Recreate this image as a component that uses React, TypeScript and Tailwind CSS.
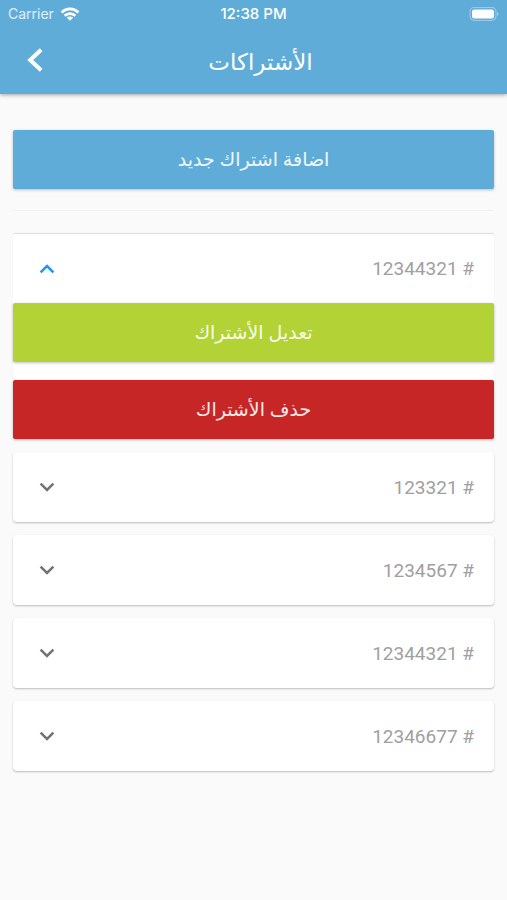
import { useState } from "react";

const subscriptions = [
  { id: 1, number: "12344321" },
  { id: 2, number: "123321" },
  { id: 3, number: "1234567" },
  { id: 4, number: "12344321" },
  { id: 5, number: "12346677" },
];

function StatusBar() {
  return (
    <div
      dir="ltr"
      className="grid h-7 grid-cols-3 items-center px-2 font-['Inter','Liberation_Sans',sans-serif] text-sm text-white"
    >
      <div className="flex items-center gap-1.5">
        <span className="text-white/80">Carrier</span>
        <svg viewBox="0 0 20 14" className="h-3.5 w-5" aria-hidden="true">
          <g fill="none" stroke="currentColor" strokeWidth="2.8">
            <path d="M1.6 5.4a12 12 0 0 1 16.8 0" />
            <path d="M4.7 8.7a7.6 7.6 0 0 1 10.6 0" />
          </g>
          <path d="M10 13.8 6.9 10.7a4.4 4.4 0 0 1 6.2 0z" fill="currentColor" />
        </svg>
      </div>
      <span className="text-center text-[15px] font-medium">12:38 PM</span>
      <svg viewBox="0 0 30 14" className="h-3.5 w-[30px] justify-self-end" aria-hidden="true">
        <rect x="1" y="0.6" width="26" height="12.8" rx="4" fill="none" stroke="#fff" strokeOpacity="0.4" />
        <rect x="3" y="2.6" width="22" height="8.8" rx="2.2" fill="#fff" />
        <path d="M28.3 5v4a2.4 2.4 0 0 0 0-4z" fill="#fff" fillOpacity="0.5" />
      </svg>
    </div>
  );
}

function ActionButton({ label, color }: { label: string; color: string }) {
  return (
    <button
      type="button"
      className={`h-[59px] w-full rounded-xs text-[19px] text-white/90 shadow-[0_1px_3px_rgba(0,0,0,0.25)] ${color}`}
    >
      {label}
    </button>
  );
}

function Chevron({ open }: { open: boolean }) {
  return (
    <svg
      viewBox="0 0 16 10"
      className={`h-2.5 w-4 ${open ? "rotate-180 text-[#2196f3]" : "text-[#737373]"}`}
      aria-hidden="true"
    >
      <path d="M1.6 1.6 8 8l6.4-6.4" fill="none" stroke="currentColor" strokeWidth="2.5" />
    </svg>
  );
}

export default function App() {
  const [openId, setOpenId] = useState<number | null>(1);

  return (
    <div
      dir="rtl"
      className="min-h-screen bg-[#fafafa] font-['Noto_Sans','DejaVu_Sans',sans-serif]"
    >
      <header className="bg-[#60acd8] shadow-[0_1px_4px_rgba(0,0,0,0.35)]">
        <StatusBar />
        <div className="flex h-[66px] items-center">
          <div className="w-14" />
          <h1 className="flex-1 text-center text-[23px] leading-8 text-white">الأشتراكات</h1>
          <button type="button" aria-label="رجوع" className="flex h-14 w-[70px] items-center justify-center pb-0.5 text-white">
            <svg viewBox="0 0 16 24" className="h-6 w-4" aria-hidden="true">
              <path d="M14.2 1.8 3.2 12l11 10.2" fill="none" stroke="currentColor" strokeWidth="4" />
            </svg>
          </button>
        </div>
      </header>

      <main className="px-[13px] pt-9 pb-8">
        <ActionButton label="اضافة اشتراك جديد" color="bg-[#60acd8]" />
        <hr className="mt-[21px] mb-[23px] border-[#f2f2f2]" />

        <ul className="flex flex-col gap-[13px]">
          {subscriptions.map(({ id, number }) => {
            const open = openId === id;
            return (
              <li
                key={id}
                className={`bg-white ${
                  open
                    ? "rounded-t-xs shadow-[0_-1px_1px_rgba(0,0,0,0.12)]"
                    : "rounded-sm shadow-[0_1px_2px_rgba(0,0,0,0.25)]"
                }`}
              >
                <button
                  type="button"
                  aria-expanded={open}
                  onClick={() => setOpenId(open ? null : id)}
                  className={`flex w-full items-center justify-between ps-5 pe-[26px] font-['Roboto',sans-serif] text-[19px] text-[#a0a0a0] ${
                    open ? "h-[69px]" : "h-[70px]"
                  }`}
                >
                  <span className="pt-0.5"># {number}</span>
                  <Chevron open={open} />
                </button>
                {open && (
                  <div className="flex flex-col gap-[18px]">
                    <ActionButton label="تعديل الأشتراك" color="bg-[#b2d235]" />
                    <ActionButton label="حذف الأشتراك" color="bg-[#c62626]" />
                  </div>
                )}
              </li>
            );
          })}
        </ul>
      </main>
    </div>
  );
}
